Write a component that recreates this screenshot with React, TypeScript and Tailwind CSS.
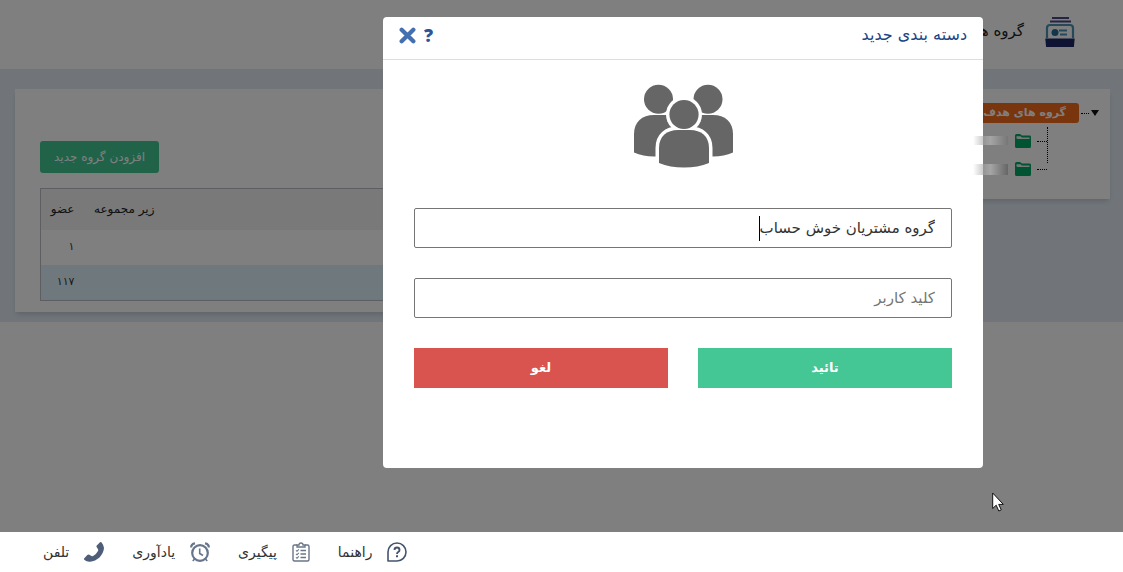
import type { ReactNode } from 'react';

function BoxIcon() {
  return (
    <svg viewBox="0 0 30 30" className="h-[30px] w-[30px]" aria-hidden="true">
      <path d="M7 1h17M5 4.500h21" stroke="#4a4a86" strokeWidth="2" />
      <path d="M2 21V11q0-3 3-3h20q3 0 3 3v10" fill="none" stroke="#4a93b4" strokeWidth="2.200" />
      <path d="M14 13.500h8M15 17.500h7" stroke="#4a93b4" strokeWidth="2" />
      <circle cx="10" cy="15.500" r="3.500" fill="#256f98" />
      <path d="M.3 21.500h29.400l-.8 8.500H1.100z" fill="#1c2668" />
    </svg>
  );
}

function FolderIcon() {
  return (
    <svg viewBox="0 0 16 14" className="h-[14px] w-4 shrink-0" aria-hidden="true">
      <path d="M0 1.500Q0 0 1.500 0H5l2 1.600h7.500Q16 1.600 16 3v9.500q0 1.500-1.500 1.500h-13Q0 14 0 12.500z" fill="#00a964" />
      <path d="M1.500 4.500V2.200h4L7 3.600h7.500V5H3z" fill="#e6f5ee" />
    </svg>
  );
}

function PeopleIcon() {
  return (
    <svg viewBox="0 0 100 84" className="h-[84px] w-[100px]" aria-hidden="true" fill="#666">
      <circle cx="25.500" cy="15.300" r="14.500" />
      <circle cx="75" cy="15.300" r="14.500" />
      <path d="M1 68.500V50C1 38 9 31 21 31h59c12 0 20 7 20 19v18.500q-9 4-20 4H21q-11 0-20-4z" />
      <circle cx="51" cy="30.500" r="18" fill="#fff" />
      <path
        d="M26 79V64c0-12 8-18 19-18h12c11 0 19 6 19 18v15q-11 4.600-25 4.600T26 79z"
        stroke="#fff"
        strokeWidth="7"
      />
      <path d="M26 79V64c0-12 8-18 19-18h12c11 0 19 6 19 18v15q-11 4.600-25 4.600T26 79z" />
      <circle cx="51" cy="30.500" r="14.600" />
    </svg>
  );
}

function HelpIcon() {
  return (
    <svg viewBox="0 0 20 20" className="h-5 w-5" aria-hidden="true" fill="none" stroke="#44546c">
      <path d="M1 19v-9a9 9 0 1 1 9 9z" strokeWidth="1.600" strokeLinejoin="round" />
      <path d="M7.500 8Q7.500 5.500 10 5.500T12.500 8q0 1.300-1.300 2-1.200.7-1.200 2" strokeWidth="1.900" />
      <path d="M10 13.300v2" strokeWidth="2" />
    </svg>
  );
}

function ClipboardIcon() {
  return (
    <svg viewBox="0 0 18 20" className="h-5 w-[18px]" aria-hidden="true" fill="none" stroke="#6a7686">
      <path d="M5 3H2.500Q1 3 1 4.500v13Q1 19 2.500 19h13q1.500 0 1.500-1.500v-13Q17 3 15.500 3H13" strokeWidth="1.400" />
      <path d="M5 5V3h2q0-2 2-2t2 2h2v2z" strokeWidth="1.300" />
      <path d="M8.500 8.500H14M8.500 12H14M8.500 15.500H14" strokeWidth="1.300" />
      <path d="m4 8.300 1 1 1.800-2M4 11.800l1 1 1.800-2M4 15.300l1 1 1.800-2" strokeWidth="1.100" />
    </svg>
  );
}

function AlarmIcon() {
  return (
    <svg viewBox="0 0 20 20" className="h-5 w-5" aria-hidden="true" fill="none" stroke="#66758b">
      <circle cx="10" cy="11" r="7.800" strokeWidth="2.200" />
      <path d="M9.700 6.500v5l3.300 2" strokeWidth="1.600" />
      <path d="M1.200 5.500Q1 2 5 1.300M18.800 5.500Q19 2 15 1.300" strokeWidth="2.200" />
      <path d="m4.500 17-1.700 2m12.700-2 1.700 2" strokeWidth="1.600" />
    </svg>
  );
}

function PhoneIcon() {
  return (
    <svg viewBox="0 0 20 20" className="h-5 w-5" aria-hidden="true" fill="#4f5e78">
      <path d="M16 .3q1-.6 1.800.4Q20 3.500 20 6c-.4 7-7 13.500-14 13.700Q3 20 .5 18q-1-.8-.2-1.800l3-3.300q.9-.9 2-.2L7.500 14q1 .5 2-.2 3-2 4.500-4.800.5-1-.1-1.900l-1.300-2q-.5-1 .4-1.900z" />
    </svg>
  );
}

const footerLinks: { label: string; icon: ReactNode }[] = [
  { label: 'راهنما', icon: <HelpIcon /> },
  { label: 'پیگیری', icon: <ClipboardIcon /> },
  { label: 'یادآوری', icon: <AlarmIcon /> },
  { label: 'تلفن', icon: <PhoneIcon /> },
];

function TreeItem() {
  return (
    <li className="flex h-7 items-center">
      <span className="ml-1.5 w-[10px] border-t border-dotted border-black" />
      <FolderIcon />
    </li>
  );
}

export default function App() {
  return (
    <div dir="rtl" lang="fa" className="relative min-h-screen overflow-hidden bg-white font-['DejaVu_Sans',sans-serif] text-[#333]">
      <header className="flex h-[69px] items-start gap-[21px] pt-[17px] pr-12">
        <BoxIcon />
        <h1 className="text-[15px] leading-7 text-[#222]">گروه های هدف</h1>
      </header>

      <main className="flex items-start gap-5 bg-[#e2ebf4] px-[13px] pt-5 pb-[10px] pl-[15px]">
        <aside className="h-[110px] w-[270px] shrink-0 bg-white pt-[14px] pr-[11px] shadow-md">
          <div className="flex items-center">
            <svg viewBox="0 0 8 6" className="h-[6px] w-2" aria-hidden="true">
              <path d="M0 0h8L4 6z" fill="#111" />
            </svg>
            <span className="mx-[2px] w-2 border-t border-dotted border-black" />
            <a href="#groups" className="flex h-5 items-center rounded-[3px] bg-[#f26a1b] px-[13px] text-[11px] font-bold text-white">
              گروه های هدف
            </a>
          </div>
          <div className="mr-[51px] flex pt-1">
            <span className="h-9 border-r border-dotted border-black" />
            <ul>
              <TreeItem />
              <TreeItem />
            </ul>
          </div>
        </aside>

        <section className="min-w-0 flex-1 bg-white px-[25px] pt-[52px] pb-[11px] shadow-md">
          <div className="flex justify-end">
            <button type="button" className="h-8 rounded-[3px] bg-[#42c692] px-[14px] text-[12px] text-white">
              افزودن گروه جدید
            </button>
          </div>
          <table className="mt-[15px] w-full border border-[#b9bdc5] text-[12px]">
            <thead>
              <tr className="h-[41px] bg-[#f3f3f3] text-[#222]">
                <th />
                <th className="w-20 pr-[10px] text-right font-normal whitespace-nowrap">زیر مجموعه</th>
                <th className="w-11 pr-[10px] text-right font-normal">عضو</th>
              </tr>
            </thead>
            <tbody>
              <tr className="h-[35px]">
                <td />
                <td />
                <td className="pr-[10px] text-right text-[11px]">۱</td>
              </tr>
              <tr className="h-9 bg-[#dff2fb]">
                <td />
                <td />
                <td className="pr-[10px] text-right text-[11px]">۱۱۷</td>
              </tr>
            </tbody>
          </table>
        </section>
      </main>

      <div className="fixed inset-0 flex items-start bg-black/50 pt-[17px] pr-[140px]">
        <div role="dialog" aria-labelledby="dialog-title" className="w-[600px] rounded-[4px] bg-white pb-20">
          <div className="flex h-[43px] items-center justify-between border-b border-[#ddd] pr-4 pb-[6px] pl-4">
            <h2 id="dialog-title" className="text-[16px] text-[#1b4585]">
              دسته بندی جدید
            </h2>
            <div className="flex items-center gap-[8px]">
              <button type="button" aria-label="help" className="font-['Open_Sans',sans-serif] text-[18px] leading-5 font-extrabold text-[#2d5597]">
                ?
              </button>
              <button type="button" aria-label="close">
                <svg viewBox="0 0 16 16" className="h-[17px] w-[17px]" aria-hidden="true">
                  <path d="m2.500 2.500 11 11m0-11-11 11" stroke="#4470b0" strokeWidth="4" strokeLinecap="round" />
                </svg>
              </button>
            </div>
          </div>
          <form className="px-[31px] pt-6">
            <div className="flex justify-center">
              <PeopleIcon />
            </div>
            <div className="relative mt-10">
              <input
                type="text"
                aria-label="نام گروه"
                defaultValue="گروه مشتریان خوش حساب"
                className="h-10 w-full rounded-[2px] border border-[#767676] px-4 text-[15px] text-[#333] outline-none"
              />
              <span className="absolute top-2 right-[192px] h-[25px] w-px bg-black" />
            </div>
            <input
              type="text"
              aria-label="کلید کاربر"
              placeholder="کلید کاربر"
              className="mt-[30px] h-10 w-full rounded-[2px] border border-[#767676] px-4 text-[15px] outline-none placeholder:text-[#757575]"
            />
            <div className="mt-[30px] grid grid-cols-2 gap-[30px]">
              <button type="button" className="h-10 bg-[#44c695] text-[13px] font-bold text-white">
                تائید
              </button>
              <button type="button" className="h-10 bg-[#d9534f] text-[13px] font-bold text-white">
                لغو
              </button>
            </div>
          </form>
        </div>
      </div>

      <div className="absolute top-[136px] right-[115px] h-[9px] w-[35px] bg-linear-to-l from-[#777] via-[#a5a5a5] to-transparent" />
      <div className="absolute top-[164px] right-[115px] h-[11px] w-[35px] bg-linear-to-l from-[#666] via-[#a5a5a5] to-transparent" />

      <svg viewBox="0 0 12 20" className="fixed right-[119px] bottom-[60px] h-5 w-3" aria-hidden="true">
        <path d="M.7 1v15.500l3.500-3.300 2.600 5.800 2.500-1.100-2.600-5.500h4.600z" fill="#fff" stroke="#111" />
      </svg>

      <footer className="fixed inset-x-0 bottom-0 flex h-10 items-center justify-end gap-7 bg-white pl-[43px] text-[14px]">
        {footerLinks.map((item) => (
          <a key={item.label} href="#" className="flex items-center gap-[15px]">
            {item.icon}
            <span>{item.label}</span>
          </a>
        ))}
      </footer>
    </div>
  );
}
